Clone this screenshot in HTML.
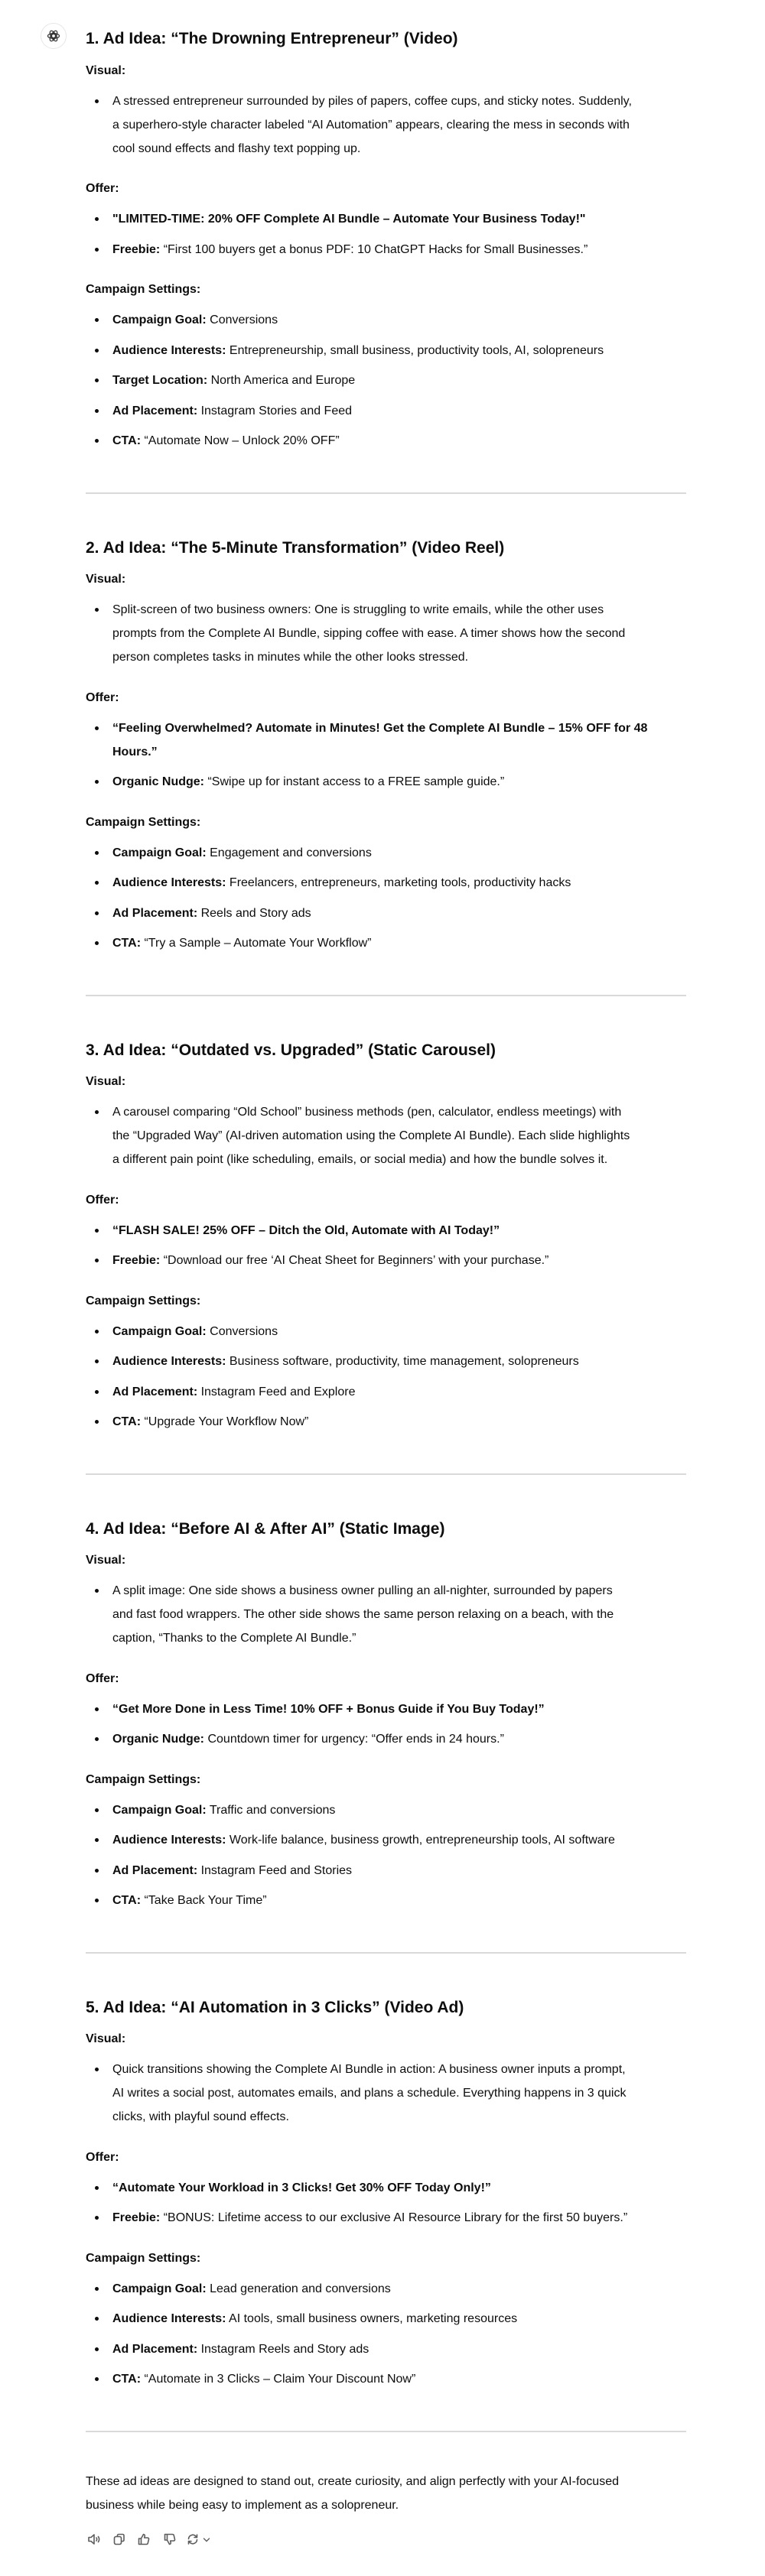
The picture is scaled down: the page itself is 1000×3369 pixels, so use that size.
<!DOCTYPE html>
<html><head><meta charset="utf-8">
<style>
*{margin:0;padding:0;box-sizing:border-box}
html,body{width:1000px;height:3369px;background:#fff;overflow:hidden}
body{font-family:"Liberation Sans",Arial,sans-serif;color:#0d0d0d;font-size:16px;line-height:31px;position:relative}
.avatar{position:absolute;left:53px;top:30px;width:34px;height:34px;border:1px solid #e6e6e6;border-radius:50%;display:flex;align-items:center;justify-content:center}
.main{position:absolute;left:112px;top:36px;width:860px}
h3{font-size:21px;line-height:30px;font-weight:bold;margin:0 0 10.5px}
.lbl{font-weight:bold;margin-bottom:9px}
ul{list-style:none;margin-bottom:21.5px}
li{position:relative;padding-left:35px;margin-bottom:8.5px}
li:last-child{margin-bottom:0}
li:before{content:"";position:absolute;left:12px;top:13px;width:5px;height:5px;border-radius:50%;background:#0d0d0d}
ul.v li{margin-bottom:0}
ul.last{margin-bottom:51.5px}
hr{border:0;border-top:2px solid #d9d9d9;width:785px;margin:0 0 56px}
b{font-weight:bold}
.icons{position:absolute;left:112px;top:3312px;height:18px;display:flex;gap:0}
.icons svg{position:absolute;top:0}
</style></head><body>
<div class="avatar">
<svg width="20" height="20" viewBox="0 0 24 24" fill="none" stroke="#333" stroke-width="1.5"><circle cx="12" cy="12" r="3"/><ellipse cx="12" cy="12" rx="9" ry="4" /><ellipse cx="12" cy="12" rx="9" ry="4" transform="rotate(60 12 12)"/><ellipse cx="12" cy="12" rx="9" ry="4" transform="rotate(120 12 12)"/></svg>
</div>
<div class="main">
<h3>1. Ad Idea: “The Drowning Entrepreneur” (Video)</h3>
<div class="lbl">Visual:</div>
<ul class="v"><li>A stressed entrepreneur surrounded by piles of papers, coffee cups, and sticky notes. Suddenly,<br>a superhero-style character labeled “AI Automation” appears, clearing the mess in seconds with<br>cool sound effects and flashy text popping up.</li></ul>
<div class="lbl">Offer:</div>
<ul><li><b>"LIMITED-TIME: 20% OFF Complete AI Bundle – Automate Your Business Today!"</b></li>
<li><b>Freebie:</b> “First 100 buyers get a bonus PDF: 10 ChatGPT Hacks for Small Businesses.”</li></ul>
<div class="lbl">Campaign Settings:</div>
<ul class="last"><li><b>Campaign Goal:</b> Conversions</li>
<li><b>Audience Interests:</b> Entrepreneurship, small business, productivity tools, AI, solopreneurs</li>
<li><b>Target Location:</b> North America and Europe</li>
<li><b>Ad Placement:</b> Instagram Stories and Feed</li>
<li><b>CTA:</b> “Automate Now – Unlock 20% OFF”</li></ul>
<hr>

<h3>2. Ad Idea: “The 5-Minute Transformation” (Video Reel)</h3>
<div class="lbl">Visual:</div>
<ul class="v"><li>Split-screen of two business owners: One is struggling to write emails, while the other uses<br>prompts from the Complete AI Bundle, sipping coffee with ease. A timer shows how the second<br>person completes tasks in minutes while the other looks stressed.</li></ul>
<div class="lbl">Offer:</div>
<ul><li><b>“Feeling Overwhelmed? Automate in Minutes! Get the Complete AI Bundle – 15% OFF for 48<br>Hours.”</b></li>
<li><b>Organic Nudge:</b> “Swipe up for instant access to a FREE sample guide.”</li></ul>
<div class="lbl">Campaign Settings:</div>
<ul class="last"><li><b>Campaign Goal:</b> Engagement and conversions</li>
<li><b>Audience Interests:</b> Freelancers, entrepreneurs, marketing tools, productivity hacks</li>
<li><b>Ad Placement:</b> Reels and Story ads</li>
<li><b>CTA:</b> “Try a Sample – Automate Your Workflow”</li></ul>
<hr>

<h3>3. Ad Idea: “Outdated vs. Upgraded” (Static Carousel)</h3>
<div class="lbl">Visual:</div>
<ul class="v"><li>A carousel comparing “Old School” business methods (pen, calculator, endless meetings) with<br>the “Upgraded Way” (AI-driven automation using the Complete AI Bundle). Each slide highlights<br>a different pain point (like scheduling, emails, or social media) and how the bundle solves it.</li></ul>
<div class="lbl">Offer:</div>
<ul><li><b>“FLASH SALE! 25% OFF – Ditch the Old, Automate with AI Today!”</b></li>
<li><b>Freebie:</b> “Download our free ‘AI Cheat Sheet for Beginners’ with your purchase.”</li></ul>
<div class="lbl">Campaign Settings:</div>
<ul class="last"><li><b>Campaign Goal:</b> Conversions</li>
<li><b>Audience Interests:</b> Business software, productivity, time management, solopreneurs</li>
<li><b>Ad Placement:</b> Instagram Feed and Explore</li>
<li><b>CTA:</b> “Upgrade Your Workflow Now”</li></ul>
<hr>

<h3>4. Ad Idea: “Before AI &amp; After AI” (Static Image)</h3>
<div class="lbl">Visual:</div>
<ul class="v"><li>A split image: One side shows a business owner pulling an all-nighter, surrounded by papers<br>and fast food wrappers. The other side shows the same person relaxing on a beach, with the<br>caption, “Thanks to the Complete AI Bundle.”</li></ul>
<div class="lbl">Offer:</div>
<ul><li><b>“Get More Done in Less Time! 10% OFF + Bonus Guide if You Buy Today!”</b></li>
<li><b>Organic Nudge:</b> Countdown timer for urgency: “Offer ends in 24 hours.”</li></ul>
<div class="lbl">Campaign Settings:</div>
<ul class="last"><li><b>Campaign Goal:</b> Traffic and conversions</li>
<li><b>Audience Interests:</b> Work-life balance, business growth, entrepreneurship tools, AI software</li>
<li><b>Ad Placement:</b> Instagram Feed and Stories</li>
<li><b>CTA:</b> “Take Back Your Time”</li></ul>
<hr>

<h3>5. Ad Idea: “AI Automation in 3 Clicks” (Video Ad)</h3>
<div class="lbl">Visual:</div>
<ul class="v"><li>Quick transitions showing the Complete AI Bundle in action: A business owner inputs a prompt,<br>AI writes a social post, automates emails, and plans a schedule. Everything happens in 3 quick<br>clicks, with playful sound effects.</li></ul>
<div class="lbl">Offer:</div>
<ul><li><b>“Automate Your Workload in 3 Clicks! Get 30% OFF Today Only!”</b></li>
<li><b>Freebie:</b> “BONUS: Lifetime access to our exclusive AI Resource Library for the first 50 buyers.”</li></ul>
<div class="lbl">Campaign Settings:</div>
<ul class="last"><li><b>Campaign Goal:</b> Lead generation and conversions</li>
<li><b>Audience Interests:</b> AI tools, small business owners, marketing resources</li>
<li><b>Ad Placement:</b> Instagram Reels and Story ads</li>
<li><b>CTA:</b> “Automate in 3 Clicks – Claim Your Discount Now”</li></ul>
<hr>
</div>
<p style="position:absolute;left:112px;top:3230px;width:800px">These ad ideas are designed to stand out, create curiosity, and align perfectly with your AI-focused<br>business while being easy to implement as a solopreneur.</p>

<div class="icons">
<svg style="left:2px" width="18" height="18" viewBox="0 0 18 18" fill="none" stroke="#5d5d5d" stroke-width="1.6" stroke-linejoin="round" stroke-linecap="round"><path d="M2 6.5h3l4-3.5v12l-4-3.5H2z"/><path d="M12 7c.8 1.2.8 2.8 0 4M14.5 5.5c1.5 2 1.5 5 0 7"/></svg>
<svg style="left:35px" width="18" height="18" viewBox="0 0 18 18" fill="none" stroke="#5d5d5d" stroke-width="1.6" stroke-linejoin="round"><rect x="2.5" y="5.5" width="9" height="10" rx="2"/><path d="M6.5 5.5V4a1.5 1.5 0 011.5-1.5h5.5A1.5 1.5 0 0115 4v6a1.5 1.5 0 01-1.5 1.5h-2"/></svg>
<svg style="left:67px" width="18" height="18" viewBox="0 0 18 18" fill="none" stroke="#5d5d5d" stroke-width="1.6" stroke-linejoin="round"><path d="M2.5 8h3v7.5h-3zM5.5 8l3-5.5c1.3 0 2 1 1.7 2.3L9.7 7h4.3c1 0 1.7.9 1.5 1.8l-1.2 5.3c-.2.8-.9 1.4-1.7 1.4H5.5"/></svg>
<svg style="left:101px" width="18" height="18" viewBox="0 0 18 18" fill="none" stroke="#5d5d5d" stroke-width="1.6" stroke-linejoin="round"><path d="M2.5 10h3V2.5h-3zM5.5 10l3 5.5c1.3 0 2-1 1.7-2.3L9.7 11h4.3c1 0 1.7-.9 1.5-1.8l-1.2-5.3c-.2-.8-.9-1.4-1.7-1.4H5.5"/></svg>
<svg style="left:131px" width="18" height="18" viewBox="0 0 18 18" fill="none" stroke="#5d5d5d" stroke-width="1.6" stroke-linecap="round" stroke-linejoin="round"><path d="M3.5 8.5A5.5 5.5 0 0113 5l1.5 1.5M14.5 3v3.5H11M14.5 9.5A5.5 5.5 0 015 13l-1.5-1.5M3.5 15v-3.5H7"/></svg>
<svg style="left:152px" width="12" height="18" viewBox="0 0 12 18" fill="none" stroke="#5d5d5d" stroke-width="1.4" stroke-linecap="round"><path d="M2.5 8l3.5 3.5L9.5 8"/></svg>
</div>
</body></html>
